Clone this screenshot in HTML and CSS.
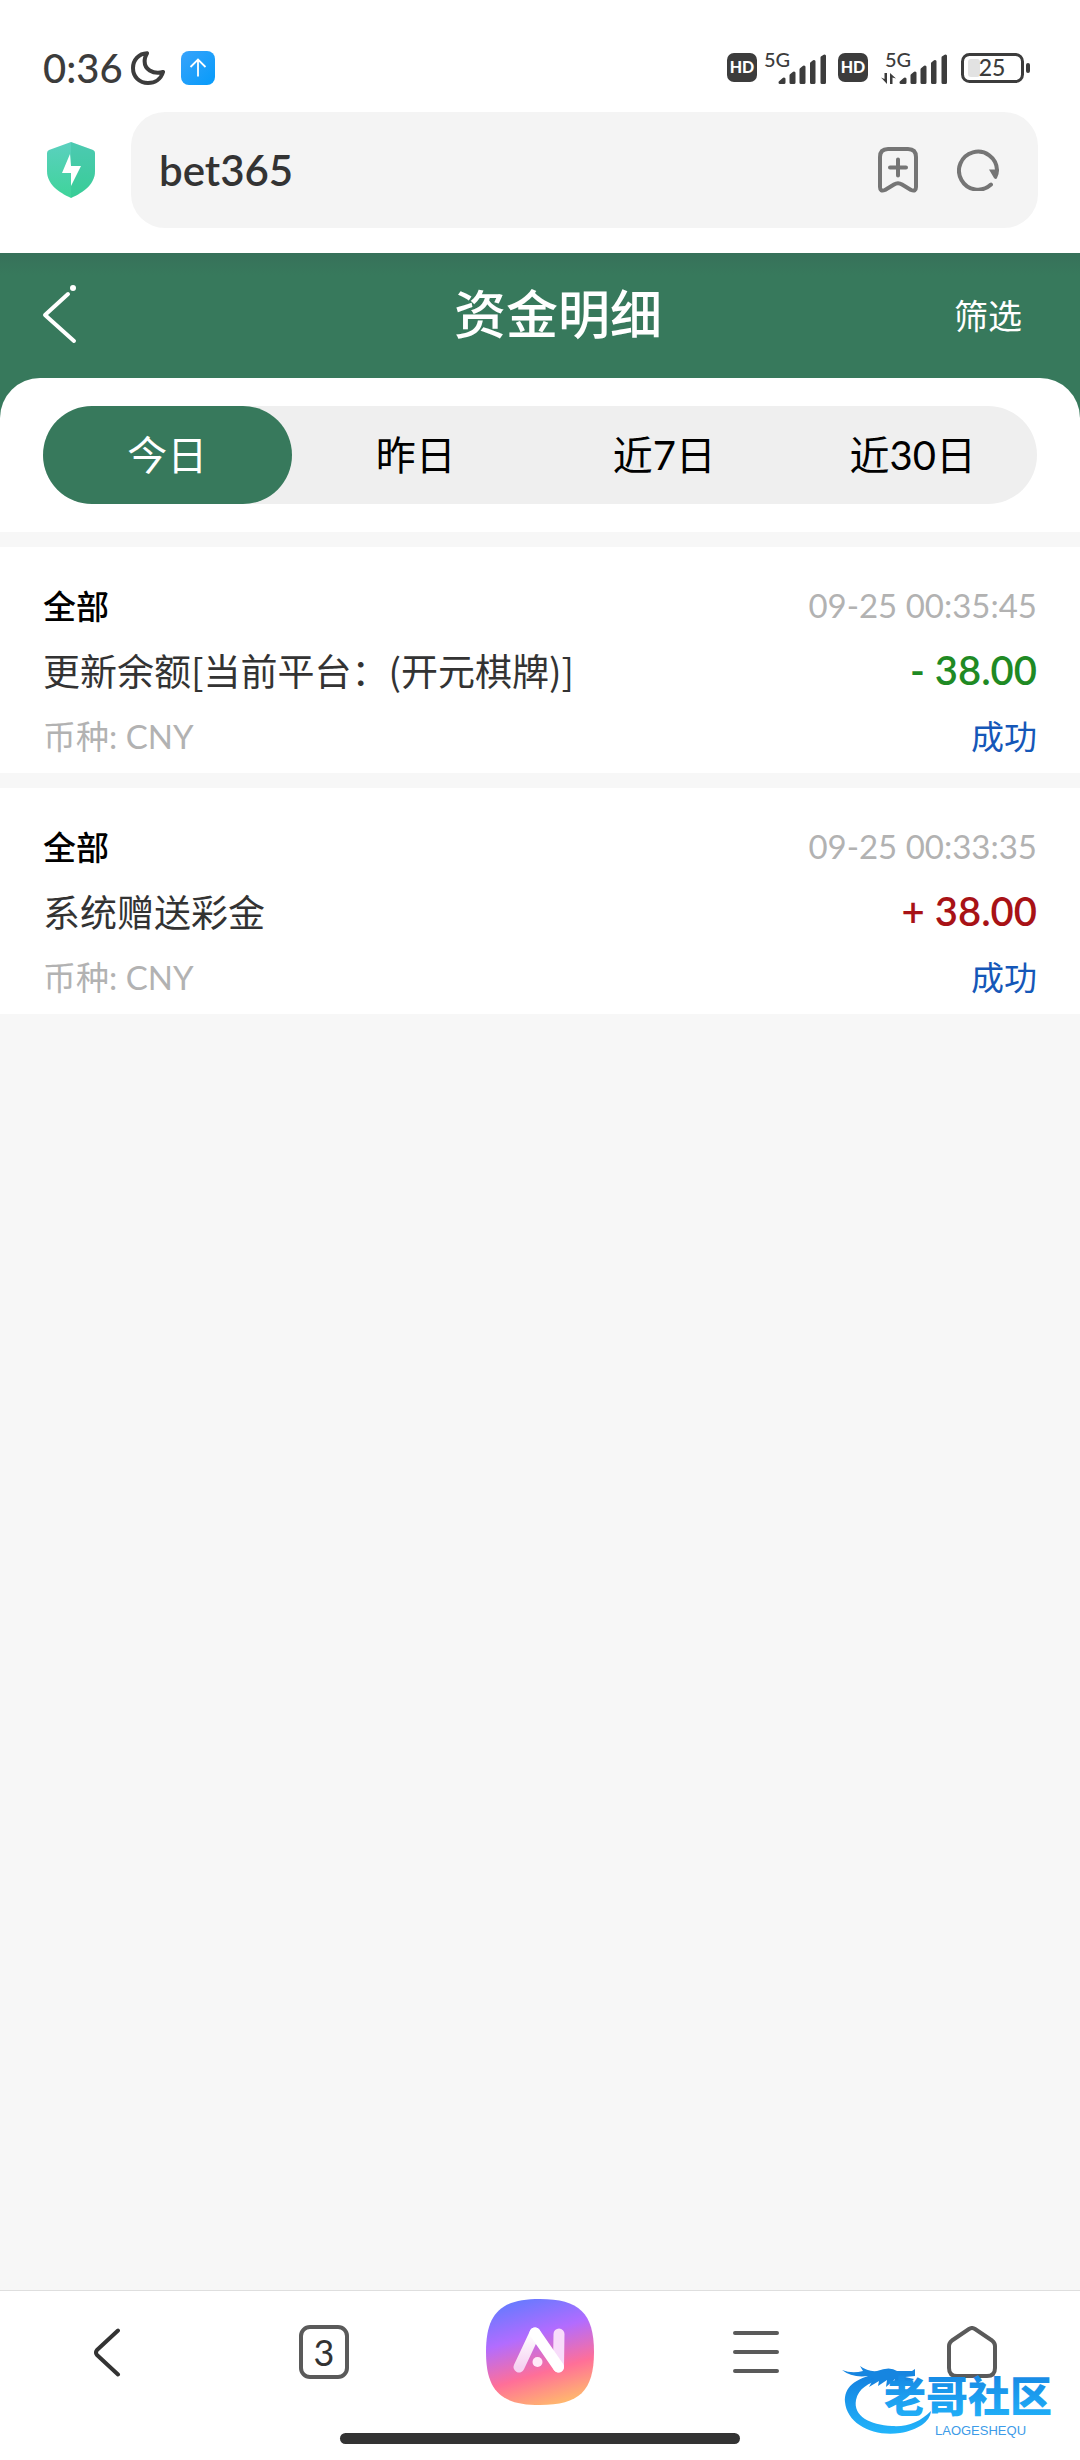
FILE: index.html
```html
<!DOCTYPE html>
<html lang="zh-CN">

<head>
  <meta charset="UTF-8">
  <meta name="viewport" content="width=device-width, initial-scale=1.0">
  <link rel="stylesheet" href="styles.css">
  <title>资金明细</title>
</head>

<body>
  <!-- status bar -->
  <div class="status-bar">
    <div class="status-left">
      <span class="clock">0:36</span>
      <svg class="moon" width="34" height="34" viewBox="0 0 34 34" fill="none" stroke="#3c3c3c" stroke-width="4" stroke-linejoin="round">
        <path d="M16 2.200C8 2.400 2 9 2 17C2 26 8.500 32 17 32C24 32 30 28 32 21C23 23.500 11.500 19 14 7C14.500 5 15.500 3.500 16 2.200Z" />
      </svg>
      <svg class="upload" width="34" height="34" viewBox="0 0 34 34">
        <defs>
          <linearGradient id="upload-fill" x1="0" y1="0" x2="1" y2="1">
            <stop offset="0" stop-color="#38a3fb" />
            <stop offset="1" stop-color="#069bfa" />
          </linearGradient>
        </defs>
        <rect width="34" height="34" rx="8" fill="url(#upload-fill)" />
        <path d="M17 25.500V9M9.500 16L17 8.500L24.500 16" fill="none" stroke="#fff" stroke-width="1.800" />
      </svg>
    </div>
    <div class="status-right">
      <svg width="30" height="30" viewBox="0 0 30 30">
        <rect width="30" height="29" rx="7" fill="#3c3c3c" />
        <text class="hd" x="15" y="20" text-anchor="middle">HD</text>
      </svg>
      <svg class="signal" width="62" height="46" viewBox="0 -6 62 46">
        <text class="net" x="0" y="16">5G</text>
        <path class="bar" d="M16 31.500L20 28V31.500ZM27 24.500L30 22V31.500H27ZM37 18.500L40 16V31.500H37ZM47.500 12.500L50 10.500V31.500H47.500ZM58 6.500L60.500 5V31.500H58Z" />
      </svg>
      <svg class="hd-second" width="30" height="30" viewBox="0 0 30 30">
        <rect width="30" height="29" rx="7" fill="#3c3c3c" />
        <text class="hd" x="15" y="20" text-anchor="middle">HD</text>
      </svg>
      <svg class="signal-second" width="66" height="46" viewBox="0 -6 66 46">
        <text class="net" x="4" y="16">5G</text>
        <path class="arrow" d="M0 26.500L3.500 28V22H6V33ZM9 33V22L15 27.500L11.500 26.500V33Z" />
        <path class="bar" d="M20 31.500L24 28V31.500ZM31 24.500L34 22V31.500H31ZM41 18.500L44 16V31.500H41ZM51.500 12.500L54 10.500V31.500H51.500ZM62 6.500L64.500 5V31.500H62Z" />
      </svg>
      <svg width="69" height="30" viewBox="0 0 69 30">
        <rect x="1.500" y="1.500" width="60" height="27" rx="7" fill="#fff" stroke="#3c3c3c" stroke-width="3" />
        <rect x="7" y="6" width="12" height="18" rx="3" fill="#e2e2e2" />
        <rect x="65" y="10" width="4" height="10" rx="2" fill="#3c3c3c" />
        <text class="charge" x="31" y="23" text-anchor="middle">25</text>
      </svg>
    </div>
  </div>

  <!-- address bar -->
  <div class="address-bar">
    <svg class="shield" width="48" height="56" viewBox="0 0 48 56">
      <defs>
        <linearGradient id="shield-fill" x1="0" y1="0" x2="0" y2="1">
          <stop offset="0" stop-color="#5bd0bf" />
          <stop offset="1" stop-color="#3fd49a" />
        </linearGradient>
      </defs>
      <path d="M24 0L46 8Q48 9 48 11V29C48 42 37 50 24 56C11 50 0 42 0 29V11Q0 9 2 8Z" fill="url(#shield-fill)" />
      <path d="M24 0L46 8Q48 9 48 11V29C48 42 37 50 24 56Z" fill="#22b98c" fill-opacity="0.250" />
      <path d="M23 12L15 31H24V44L34 24H24Z" fill="#fff" />
    </svg>
    <div class="address-box">
      <input class="address-input" type="text" value="bet365" aria-label="网址">
      <button class="icon-button" type="button" aria-label="收藏">
        <svg width="40" height="46" viewBox="0 0 40 46" fill="none" stroke="#757575" stroke-width="4" stroke-linecap="round" stroke-linejoin="round">
          <path d="M2 10Q2 2 10 2H30Q38 2 38 10V40Q38 45 33 43L24 37.500Q20 35 16 37.500L7 43Q2 45 2 40Z" />
          <path d="M12 20.500H28M20 12.500V28.500" />
        </svg>
      </button>
      <button class="icon-button" type="button" aria-label="刷新">
        <svg width="42" height="42" viewBox="0 0 42 42">
          <path d="M34 35.500A19 19 0 1 1 40 21" fill="none" stroke="#757575" stroke-width="4" stroke-linecap="round" />
          <path d="M32 20.500H42Q42 26 40 29Q39 31 37 29Z" fill="#757575" />
        </svg>
      </button>
    </div>
  </div>

  <header class="page-header">
    <button class="back" type="button" aria-label="返回">
      <svg width="36" height="60" viewBox="0 0 36 60" fill="none" stroke="#fff" stroke-width="4" stroke-linecap="round" stroke-linejoin="round">
        <path d="M26 10L3 31L32 57" />
        <circle cx="31" cy="4" r="3" fill="#fff" stroke="none" />
      </svg>
    </button>
    <h1 class="page-title">资金明细</h1>
    <button class="filter" type="button">筛选</button>
  </header>

  <main class="content">
    <div class="tabs-wrap">
      <div class="tabs">
        <button class="tab active" type="button">今日</button>
        <button class="tab" type="button">昨日</button>
        <button class="tab" type="button">近7日</button>
        <button class="tab" type="button">近30日</button>
      </div>
    </div>

    <ul class="records">
      <li class="record">
        <div class="line"><span class="kind">全部</span><span class="time">09-25 00:35:45</span></div>
        <div class="line"><span class="desc">更新余额[当前平台：(开元棋牌)]</span><span class="amount out">- 38.00</span></div>
        <div class="line"><span class="currency">币种: CNY</span><span class="state">成功</span></div>
      </li>
      <li class="record">
        <div class="line"><span class="kind">全部</span><span class="time">09-25 00:33:35</span></div>
        <div class="line"><span class="desc">系统赠送彩金</span><span class="amount in">+ 38.00</span></div>
        <div class="line"><span class="currency">币种: CNY</span><span class="state">成功</span></div>
      </li>
    </ul>
  </main>

  <!-- browser toolbar -->
  <footer class="bottom">
    <nav class="toolbar">
      <button class="tool" type="button" aria-label="后退">
        <svg width="28" height="52" viewBox="0 0 28 52" fill="none" stroke="#333" stroke-width="4" stroke-linecap="round" stroke-linejoin="round">
          <path d="M24 4.500L3 24Q1 26.500 3 29L24 48.500" />
        </svg>
      </button>
      <button class="tool" type="button" aria-label="标签页"><span class="tab-count">3</span></button>
      <button class="tool" type="button" aria-label="AI">
        <svg width="108" height="106" viewBox="0 0 108 106">
          <defs>
            <linearGradient id="ai-fill" x1="0.300" y1="0" x2="0.600" y2="1">
              <stop offset="0" stop-color="#667aff" />
              <stop offset="0.350" stop-color="#b26cff" />
              <stop offset="0.700" stop-color="#ff6f98" />
              <stop offset="1" stop-color="#ffb56f" />
            </linearGradient>
            <linearGradient id="leg-fill" x1="0" y1="0" x2="0" y2="1">
              <stop offset="0" stop-color="#fff" />
              <stop offset="1" stop-color="#f6d2f2" />
            </linearGradient>
          </defs>
          <path d="M54 0C93 0 108 14 108 53S93 106 54 106S0 92 0 53S15 0 54 0Z" fill="url(#ai-fill)" />
          <g fill="none" stroke-width="11" stroke-linecap="round" stroke-linejoin="round">
            <path d="M33 68L49 34" stroke="url(#leg-fill)" />
            <path d="M73 35L72.500 68" stroke="#f8dcfa" />
            <path d="M49 34L72.500 68" stroke="#fff" />
          </g>
          <circle cx="51.500" cy="63" r="5" fill="#ffe9f8" />
        </svg>
      </button>
      <button class="tool" type="button" aria-label="菜单">
        <svg width="46" height="44" viewBox="0 0 46 44" stroke="#5a5a5a" stroke-width="4" stroke-linecap="round">
          <path d="M2 3H44M2 22H44M2 41H44" />
        </svg>
      </button>
      <button class="tool" type="button" aria-label="主页">
        <svg width="50" height="52" viewBox="0 0 50 52" fill="none" stroke="#5a5a5a" stroke-width="4" stroke-linejoin="round">
          <path d="M22 3Q25 1 28 3L45 14.500Q48 17 48 20V42Q48 50 40 50H10Q2 50 2 42V20Q2 17 5 14.500Z" />
        </svg>
      </button>
    </nav>
    <div class="home-indicator"></div>

    <svg class="stamp" width="226" height="76" viewBox="0 0 226 76">
      <defs>
        <linearGradient id="stamp-fill" x1="0" y1="0" x2="0" y2="1">
          <stop offset="0" stop-color="#147fdf" />
          <stop offset="1" stop-color="#22b5fb" />
        </linearGradient>
      </defs>
      <!-- dragon tail and head -->
      <path d="M36 8C12 12 2 22 3 36C5 58 31 71 58 67C76 64 88 56 89 45C78 56 66 61 50 60C28 59 11 50 14 34C16 23 27 16 39 14Z" fill="url(#stamp-fill)" />
      <path d="M0 4Q10 8 21 5L18 0Q26 6 35 5Q48 0 55 5L70 5L73 3V10L63 11L72 13L68 17L59 14L51 19L53 13L44 21L45 14L36 20L37 15L27 21L32 12L21 16L26 10Q10 12 0 4Z" fill="#1685e0" />
      <text class="stamp-name" x="42" y="46" fill="url(#stamp-fill)">老哥社区</text>
      <text class="stamp-latin" x="93" y="69">LAOGESHEQU</text>
    </svg>
  </footer>

  <script>
    const tabs = document.querySelectorAll(".tab");

    tabs.forEach(function (tab) {
      tab.addEventListener("click", function () {
        document.querySelector(".tab.active").classList.remove("active");
        tab.classList.add("active");
      });
    });
  </script>
</body>

</html>
```
FILE: styles.css
```css
* {
  box-sizing: border-box;
}

body {
  margin: 0;
  min-height: 100vh;
  display: flex;
  flex-direction: column;
  background-color: #f7f7f7;
  color: #000;
  font-family: Lato, 'Noto Sans CJK SC', sans-serif;
}

button {
  border: none;
  padding: 0;
  background: none;
  color: inherit;
  font-family: inherit;
  cursor: pointer;
}

svg {
  display: block;
  flex-shrink: 0;
}

/* status bar */
.status-bar {
  display: flex;
  justify-content: space-between;
  align-items: center;
  height: 112px;
  padding: 24px 50px 0 43px;
  background-color: #fff;
}

.status-left,
.status-right {
  display: flex;
  align-items: center;
}

.clock {
  font-size: 40px;
  font-weight: 500;
  line-height: 48px;
  color: #3c3c3c;
}

.moon {
  margin-left: 8px;
}

.upload {
  margin-left: 16px;
}

.signal {
  margin-left: 7px;
}

.hd-second {
  margin-left: 12px;
}

.signal-second {
  margin: 0 14px 0 13px;
}

.hd {
  font-family: Lato, sans-serif;
  font-size: 16px;
  font-weight: 900;
  fill: #fff;
}

.net,
.charge {
  font-family: Lato, sans-serif;
  font-size: 20px;
  font-weight: 500;
  fill: #3c3c3c;
}

.charge {
  font-size: 23px;
}

.arrow {
  fill: #3c3c3c;
}

.bar {
  fill: #3c3c3c;
  stroke: #3c3c3c;
  stroke-width: 3;
  stroke-linejoin: round;
}

/* address bar */
.address-bar {
  display: flex;
  align-items: center;
  gap: 36px;
  padding: 0 42px 25px 47px;
  background-color: #fff;
}

.address-box {
  flex: 1;
  display: flex;
  align-items: center;
  gap: 39px;
  height: 116px;
  padding: 0 39px 0 28px;
  border-radius: 34px;
  background-color: #f4f4f4;
}

.address-input {
  flex: 1;
  min-width: 0;
  border: none;
  outline: none;
  background: none;
  padding: 0;
  color: #333;
  font-family: inherit;
  font-size: 42px;
  font-weight: 600;
}

/* page header */
.page-header {
  display: flex;
  align-items: center;
  height: 165px;
  padding: 0 58px 43px 42px;
  background: linear-gradient(#37715a, #37795c 22px);
  color: #fff;
}

.back {
  width: 120px;
}

.page-title {
  flex: 1;
  margin: 0;
  text-align: center;
  font-size: 52px;
  font-weight: 500;
  line-height: 64px;
}

.filter {
  font-size: 34px;
}

/* tabs */
.content {
  flex: 1;
  margin-top: -40px;
}

.tabs-wrap {
  padding: 28px 43px;
  border-radius: 40px 40px 0 0;
  background-color: #fff;
}

.tabs {
  display: flex;
  border-radius: 49px;
  background-color: #efefef;
}

.tab {
  flex: 1;
  height: 98px;
  padding-bottom: 5px;
  border-radius: 49px;
  font-size: 40px;
}

.tab.active {
  background-color: #37795c;
  color: #fff;
}

/* records */
.records {
  list-style-type: none;
  margin: 0;
  padding: 0;
}

.record {
  margin-top: 15px;
  padding: 25px 43px 6px;
  background-color: #fff;
}

.line {
  display: flex;
  justify-content: space-between;
  align-items: center;
  height: 65px;
  font-size: 33px;
}

.kind {
  font-weight: 500;
}

.time,
.currency {
  color: #b2b2b2;
}

.desc {
  color: #333;
  font-family: 'Noto Sans CJK SC', sans-serif;
  font-size: 37px;
}

.amount {
  font-size: 40px;
  font-weight: 600;
}

.out {
  color: #1f8a24;
}

.in {
  color: #a81216;
}

.state {
  color: #1557b8;
}

/* browser toolbar */
.bottom {
  position: relative;
  padding-bottom: 16px;
  border-top: 1px solid #dedede;
  background-color: #fff;
}

.toolbar {
  display: flex;
  height: 122px;
}

.tool {
  flex: 1;
  display: flex;
  align-items: center;
  justify-content: center;
}

.tab-count {
  width: 50px;
  height: 54px;
  border: 4px solid #5a5a5a;
  border-radius: 11px;
  color: #333;
  font-size: 36px;
  line-height: 46px;
}

.home-indicator {
  width: 37%;
  height: 11px;
  margin: 20px auto 0;
  border-radius: 6px;
  background-color: #333;
}

.stamp {
  position: absolute;
  right: 12px;
  bottom: 18px;
}

.stamp-name {
  font-family: 'Noto Sans CJK SC', sans-serif;
  font-size: 42px;
  font-weight: 900;
}

.stamp-latin {
  font-family: 'Liberation Sans', sans-serif;
  font-size: 13px;
  fill: #3d9be8;
}
```
